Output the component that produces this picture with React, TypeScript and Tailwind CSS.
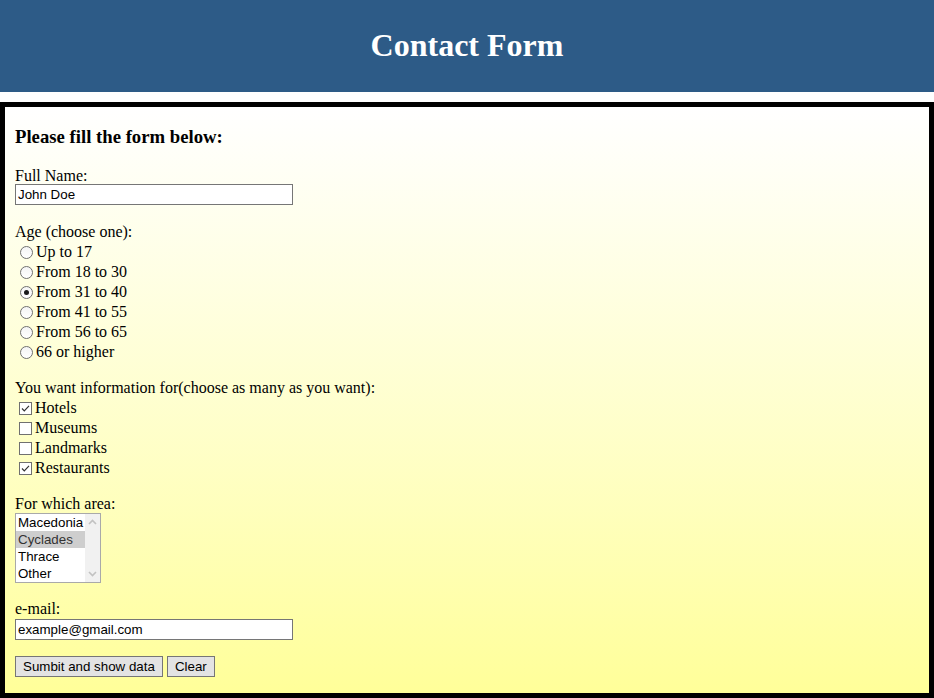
import React from "react";

const serif = { fontFamily: '"Liberation Serif", "Times New Roman", serif' };
const sans = { fontFamily: '"Liberation Sans", Arial, sans-serif' };

function Radio({ label, checked }: { label: string; checked?: boolean }) {
  return (
    <div className="flex items-start h-[20px]">
      <span className="mt-[5px] ml-[5px] mr-[3px] w-[13px] h-[13px] rounded-full border border-[#707070] bg-gradient-to-b from-[#f4f4f4] to-white flex items-center justify-center shrink-0">
        {checked && <span className="w-[5px] h-[5px] rounded-full bg-[#1a1a1a]" />}
      </span>
      <span className="mt-[2px] leading-[18px] text-[16px] text-black">{label}</span>
    </div>
  );
}

function Check({ label, checked }: { label: string; checked?: boolean }) {
  return (
    <div className="flex items-start h-[20px]">
      <span className="mt-[5px] ml-[4px] mr-[3px] w-[13px] h-[13px] border border-[#707070] bg-white flex items-center justify-center shrink-0">
        {checked && (
          <svg width="11" height="11" viewBox="0 0 11 11">
            <path d="M2 5.5 L4.3 7.8 L9 2.8" fill="none" stroke="#333" strokeWidth="1.2" />
          </svg>
        )}
      </span>
      <span className="mt-[2px] leading-[18px] text-[16px] text-black">{label}</span>
    </div>
  );
}

function TextBox({ value, className = "" }: { value: string; className?: string }) {
  return (
    <div
      className={`w-[278px] h-[21px] border border-[#767676] bg-white pl-[2px] flex items-center text-[13.33px] text-black leading-none ${className}`}
      style={sans}
    >
      {value}
    </div>
  );
}

export default function App() {
  return (
    <div className="w-[934px] h-[698px] bg-white overflow-hidden" style={serif}>
      <div className="h-[92px] bg-[#2d5b87] flex items-center justify-center pb-[2px]">
        <h1 className="text-[32px] font-bold text-white leading-[37px]">Contact Form</h1>
      </div>
      <div className="mt-[10px] border-[5px] border-black h-[596px] bg-linear-to-b from-white to-[#ffff99] pl-[10px]">
        <h3 className="mt-[19px] text-[18.72px] font-bold leading-[22px] text-black">
          Please fill the form below:
        </h3>
        <div className="mt-[19px] leading-[17px] text-[16px]">Full Name:</div>
        <TextBox value="John Doe" />

        <div className="mt-[18px] leading-[18px] text-[16px]">Age (choose one):</div>
        <Radio label="Up to 17" />
        <Radio label="From 18 to 30" />
        <Radio label="From 31 to 40" checked />
        <Radio label="From 41 to 55" />
        <Radio label="From 56 to 65" />
        <Radio label="66 or higher" />

        <div className="mt-[18px] leading-[18px] text-[16px]">
          You want information for(choose as many as you want):
        </div>
        <Check label="Hotels" checked />
        <Check label="Museums" />
        <Check label="Landmarks" />
        <Check label="Restaurants" checked />

        <div className="mt-[18px] leading-[18px] text-[16px]">For which area:</div>
        <div className="w-[86px] h-[70px] border border-[#a9a9a9] bg-white flex" style={sans}>
          <div className="flex-1 flex flex-col text-[13.33px] leading-[17px]">
            <div className="h-[17px] pl-[2px] text-black">Macedonia</div>
            <div className="h-[17px] pl-[2px] bg-[#cecece] text-[#333]">Cyclades</div>
            <div className="h-[17px] pl-[2px] text-black">Thrace</div>
            <div className="h-[17px] pl-[2px] text-black">Other</div>
          </div>
          <div className="w-[15px] bg-[#f1f1f1] flex flex-col items-center justify-between py-[5px]">
            <svg width="9" height="6" viewBox="0 0 9 6">
              <path d="M1 5 L4.5 1.5 L8 5" fill="none" stroke="#c2c2c2" strokeWidth="1.6" />
            </svg>
            <svg width="9" height="6" viewBox="0 0 9 6">
              <path d="M1 1 L4.5 4.5 L8 1" fill="none" stroke="#c2c2c2" strokeWidth="1.6" />
            </svg>
          </div>
        </div>

        <div className="mt-[17px] leading-[18px] text-[16px]">e-mail:</div>
        <TextBox value="example@gmail.com" className="mt-[1px]" />

        <div className="mt-[16px] flex gap-[4px]" style={sans}>
          <button className="h-[21px] px-[7px] border border-[#767676] bg-[#e3e3e3] text-[13.33px] text-black leading-none">
            Sumbit and show data
          </button>
          <button className="h-[21px] px-[7px] border border-[#767676] bg-[#e3e3e3] text-[13.33px] text-black leading-none">
            Clear
          </button>
        </div>
      </div>
    </div>
  );
}
